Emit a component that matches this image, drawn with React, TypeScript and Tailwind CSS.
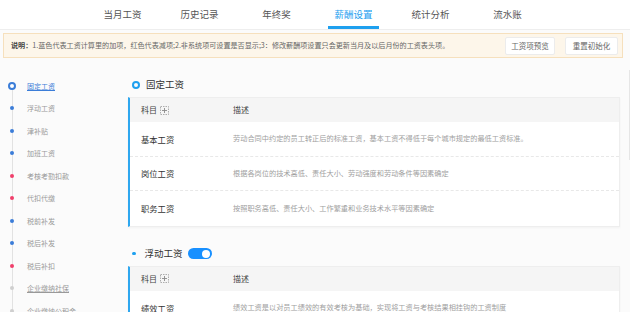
import React from 'react';

const tabs = ['当月工资', '历史记录', '年终奖', '薪酬设置', '统计分析', '流水账'];

const sideItems = [
  { label: '固定工资', kind: 'active' },
  { label: '浮动工资', kind: 'blue' },
  { label: '津补贴', kind: 'blue' },
  { label: '加班工资', kind: 'blue' },
  { label: '考核考勤扣款', kind: 'red' },
  { label: '代扣代缴', kind: 'red' },
  { label: '税前补发', kind: 'blue' },
  { label: '税后补发', kind: 'blue' },
  { label: '税后补扣', kind: 'red' },
  { label: '企业缴纳社保', kind: 'gray', underline: true },
  { label: '企业缴纳公积金', kind: 'gray' },
];

const fixedRows = [
  { name: '基本工资', desc: '劳动合同中约定的员工转正后的标准工资，基本工资不得低于每个城市规定的最低工资标准。' },
  { name: '岗位工资', desc: '根据各岗位的技术高低、责任大小、劳动强度和劳动条件等因素确定' },
  { name: '职务工资', desc: '按照职务高低、责任大小、工作繁重和业务技术水平等因素确定' },
];

const floatRows = [
  { name: '绩效工资', desc: '绩效工资是以对员工绩效的有效考核为基础，实现将工资与考核结果相挂钩的工资制度' },
];

function PlusBox() {
  return (
    <svg width="9" height="9" viewBox="0 0 9 9" className="ml-[3px]">
      <rect x="0.5" y="0.5" width="8" height="8" fill="none" stroke="#9a9a9a" strokeWidth="0.8" strokeDasharray="1.5 1" />
      <path d="M4.5 2v5M2 4.5h5" stroke="#8a8a8a" strokeWidth="0.9" />
    </svg>
  );
}

function Card({ rows }: { rows: { name: string; desc: string }[] }) {
  return (
    <div className="bg-white border border-[#eeeeee] border-l-2 border-l-[#2ea7ef] shadow-[0_1px_2px_rgba(0,0,0,0.04)]">
      <div className="flex items-center h-[24px] bg-[#f5f5f5] text-[8px] text-[#444]">
        <div className="w-[103px] pl-[11px] flex items-center">
          科目
          <PlusBox />
        </div>
        <div>描述</div>
      </div>
      {rows.map((r, i) => (
        <div
          key={r.name}
          className={`flex items-center h-[34.5px] ${i < rows.length - 1 ? 'border-b border-dashed border-[#e8e8e8]' : ''}`}
        >
          <div className="w-[103px] pl-[11px] text-[8.3px] text-[#333]">{r.name}</div>
          <div className="text-[7.2px] text-[#a0a0a0]">{r.desc}</div>
        </div>
      ))}
    </div>
  );
}

export default function App() {
  return (
    <div
      className="w-[630px] h-[312px] overflow-hidden bg-[#fbfbfb] relative"
      style={{ fontFamily: '"Noto Sans CJK SC", "Noto Sans", sans-serif' }}
    >
      {/* top tabs */}
      <div className="h-[30px] bg-white border-b border-[#eeeeee] flex justify-center">
        {tabs.map((t) => (
          <div key={t} className="w-[77px] flex justify-center">
            <div
              className={`h-full px-[6px] flex items-center text-[9.5px] ${
                t === '薪酬设置' ? 'text-[#1ea0ef] border-b-[3px] border-[#1ea0ef] pt-[3px]' : 'text-[#555]'
              }`}
            >
              {t}
            </div>
          </div>
        ))}
      </div>

      {/* notice */}
      <div className="pt-[3px] pl-[3px] pr-[7px]">
        <div className="h-[25px] bg-[#fdf6ea] border border-[#f6e0bd] flex items-center pl-[7px] pr-[4px]">
          <div className="flex-1 text-[7.1px] text-[#666]">
            <span className="font-bold text-[#444]">说明：</span>
            1.蓝色代表工资计算里的加项，红色代表减项;2.非系统项可设置是否显示;3：修改薪酬项设置只会更新当月及以后月份的工资表头项。
          </div>
          <button className="h-[18px] w-[50px] bg-white border border-[#ececec] rounded-[2px] text-[7.5px] text-[#666] mr-[10px]">
            工资项预览
          </button>
          <button className="h-[18px] w-[53px] bg-white border border-[#ececec] rounded-[2px] text-[7.5px] text-[#666]">
            重置初始化
          </button>
        </div>
      </div>

      <div className="flex">
        {/* sidebar timeline */}
        <div className="w-[128px] pt-[16.5px] relative">
          <div className="absolute left-[12px] top-[28px] bottom-0 w-px bg-[#e2e2e2]" />
          {sideItems.map((s) => (
            <div key={s.label} className="h-[22.5px] flex items-center relative">
              <div className="w-[24px] flex justify-center">
                {s.kind === 'active' ? (
                  <div className="w-[8px] h-[8px] rounded-full border-2 border-[#3b7dd8] bg-white" />
                ) : (
                  <div
                    className={`w-[4px] h-[4px] rounded-full ${
                      s.kind === 'blue' ? 'bg-[#3b7dd8]' : s.kind === 'red' ? 'bg-[#f03f6b]' : 'bg-[#cfcfcf]'
                    }`}
                  />
                )}
              </div>
              <div
                className={`ml-[3px] text-[7px] ${
                  s.kind === 'active' ? 'text-[#3b7dd8] underline' : s.underline ? 'text-[#999] underline' : 'text-[#999]'
                }`}
              >
                {s.label}
              </div>
            </div>
          ))}
        </div>

        {/* main content */}
        <div className="flex-1 pr-[10px] pt-[19.5px]">
          <div className="h-[14px] flex items-center mb-[5.5px]">
            <div className="w-[8px] h-[8px] rounded-full border-2 border-[#1ea0ef] ml-[4px] mr-[6px]" />
            <span className="text-[9.5px] text-[#333]">固定工资</span>
          </div>
          <Card rows={fixedRows} />

          <div className="h-[14px] flex items-center mt-[20px] mb-[5px]">
            <div className="w-[3.5px] h-[3.5px] rounded-full bg-[#1ea0ef] ml-[4px] mr-[9px]" />
            <span className="text-[9.5px] text-[#333]">浮动工资</span>
            <div className="ml-[5px] w-[24px] h-[11px] rounded-full bg-[#1890ff] flex items-center justify-end pr-[1.5px]">
              <div className="w-[8px] h-[8px] rounded-full bg-white" />
            </div>
          </div>
          <Card rows={floatRows} />
        </div>
      </div>

      {/* scrollbar hint */}
      <div className="absolute right-0 top-[70px] h-[90px] w-px bg-[#e6e6e6]" />
    </div>
  );
}
